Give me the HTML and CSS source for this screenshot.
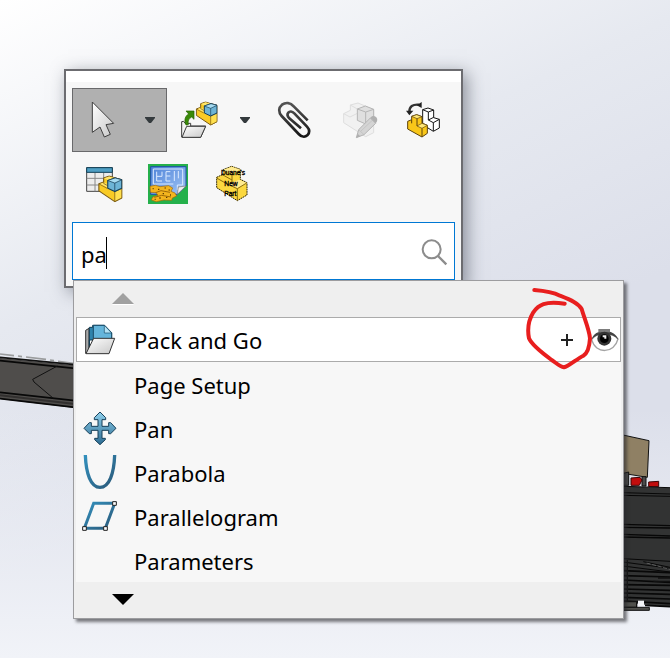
FILE: index.html
```html
<!DOCTYPE html>
<html lang="en">
<head>
<meta charset="utf-8">
<meta name="viewport" content="width=device-width, initial-scale=1">
<title>Shortcut bar</title>
<link rel="stylesheet" href="styles.css">
</head>
<body>
<svg class="defs" aria-hidden="true">
  <defs>
    <linearGradient id="steel" x1="0" y1="0" x2="1" y2="1"><stop offset="0" stop-color="#ffffff"/><stop offset="1" stop-color="#c8c8c8"/></linearGradient>
    <linearGradient id="blue" x1="0" y1="0" x2="0" y2="1"><stop offset="0" stop-color="#8fd0ec"/><stop offset="1" stop-color="#2d6c93"/></linearGradient>
    <linearGradient id="sketch" x1="0" y1="0" x2="1" y2="1"><stop offset="0" stop-color="#3390bd"/><stop offset="1" stop-color="#2a5878"/></linearGradient>
    <linearGradient id="clip" x1="0" y1="0" x2="0" y2="1"><stop offset="0" stop-color="#555"/><stop offset="1" stop-color="#151515"/></linearGradient>
    <linearGradient id="print" x1="0" y1="0" x2="1" y2="1"><stop offset="0" stop-color="#4f83d8"/><stop offset="1" stop-color="#9fc4f5"/></linearGradient>
    <symbol id="part" viewBox="-2 -2 66 73">
      <path d="M0 21 13 16V5L28 0 40 4 62 10V59L43 69 0 40Z" fill="#f9cb25" stroke="#7a5a12" stroke-width="3" stroke-linejoin="round"/>
      <path d="M14 6 28 1 42 5 26 11ZM2 22 13 17 24 22V33L18 28Z" fill="#ffe56b"/>
      <path d="M43 42 62 33V59L43 69Z" fill="#ffe04f" stroke="#7a5a12" stroke-width="2"/>
      <path d="M13 16V20L24 26M0 21 22 33" fill="none" stroke="#7a5a12" stroke-width="2"/>
      <path d="M24 12 44 5 62 10V33L43 42 24 33Z" fill="#6db4d6" stroke="#173f57" stroke-width="3" stroke-linejoin="round"/>
      <path d="M24 12 44 5 62 10 43 19Z" fill="#a7dcf2" stroke="#173f57" stroke-width="2"/>
      <path d="M43 19V41" stroke="#173f57" stroke-width="2"/>
    </symbol>
  </defs>
</svg>

<main class="viewport">
  <svg class="beam" viewBox="0 60 225 180" aria-hidden="true">
    <path d="M0 84 225 106V234L0 207Z" fill="#4f4d4b"/>
    <path d="M0 72 42 77M54 78 66 80M78 81 138 88M150 90 162 92M174 94 225 101" stroke="#9a9c9d" stroke-width="5"/>
    <path d="M0 82 225 104" stroke="#111" stroke-width="5"/>
    <path d="M0 92 225 115M0 187 225 212" stroke="#080808" stroke-width="5"/>
    <path d="M0 196 225 222" stroke="#32302f" stroke-width="6"/>
    <path d="M0 206 225 232" stroke="#080808" stroke-width="5"/>
    <path d="M172 108 98 148 102 156 160 205" fill="none" stroke="#111" stroke-width="3"/>
  </svg>
  <svg class="machine" viewBox="99 39 141 540" aria-hidden="true">
    <path d="M99 45 177 62 172 172 99 160Z" fill="#8f8064" stroke="#111" stroke-width="3"/>
    <path d="M100 160 116 156V196H100ZM156 170H168V198H156Z" fill="#4b4b4b" stroke="#111" stroke-width="3"/>
    <path d="M123 174 150 172 156 180 148 196H123ZM176 186 206 184V200H176Z" fill="#c20d0d" stroke="#3c0505" stroke-width="3"/>
    <path d="M99 199 240 204V560L165 554 99 545Z" fill="#323333"/>
    <path d="M99 199 240 203M99 218 240 222M99 226 240 229" stroke="#070707" stroke-width="3"/>
    <path d="M99 313 240 317M99 322 240 324M99 343 240 348M99 351 240 354" stroke="#070707" stroke-width="4"/>
    <path d="M99 416 240 424M99 426 240 445M99 438 240 456M160 425 240 442" stroke="#070707" stroke-width="3"/>
    <path d="M170 429 240 448" stroke="#777" stroke-width="2" stroke-dasharray="12 5"/>
    <path d="M99 452 240 458M99 467 240 471M99 480 240 487M99 494 240 496M99 507 240 511M99 519 240 523M99 532 240 537M99 543 240 551M165 556 240 560" stroke="#080808" stroke-width="5"/>
    <path d="M112 420V548M204 474H240M190 484H240" stroke="#111" stroke-width="4"/>
    <path d="M99 545H140V562H99Z" fill="#50504c" stroke="#111" stroke-width="4"/>
    <path d="M99 562H178V571H99Z" fill="#50504c" stroke="#111" stroke-width="3"/>
    <path d="M144 542H162V557H144Z" fill="#f4f5f8"/>
  </svg>

  <div class="shortcut">
    <section class="palette" aria-label="Shortcut bar">
      <div class="titlebar"></div>
      <div class="palette-body">
        <div class="tools">
          <div class="split selected">
            <button class="tool" aria-label="Select">
              <svg class="icon" viewBox="72 120 120 120"><path d="M97 126V217L120 201 133 231 151 223 138 194 161 190Z" fill="url(#steel)" stroke="#3f3f3f" stroke-width="3" stroke-linejoin="round"/></svg>
            </button>
            <button class="more" aria-label="Select options"><svg class="chevron" viewBox="0 0 12 6"><path d="M1 0H11V1L7 6H5L1 1Z"/></svg></button>
          </div>
          <div class="split">
            <button class="tool" aria-label="Open part">
              <svg class="icon" viewBox="357 120 120 120">
                <use href="#part" x="407" y="124" width="66" height="73"/>
                <path d="M365 231V185L371 184 375 190H392V198H437L422 232Z" fill="#f4f4f4" stroke="#3c3c3c" stroke-width="3" stroke-linejoin="round"/>
                <path d="M380 199H437L422 232H366Z" fill="url(#steel)" stroke="#3c3c3c" stroke-width="3" stroke-linejoin="round"/>
                <path d="M378 195C371 180 376 167 386 162L378 153H402V178L395 171C386 176 383 182 385 194Z" fill="#3a8a08" stroke="#256200" stroke-width="2"/>
              </svg>
            </button>
            <button class="more" aria-label="Open options"><svg class="chevron" viewBox="0 0 12 6"><path d="M1 0H11V1L7 6H5L1 1Z"/></svg></button>
          </div>
          <button class="tool" aria-label="Attach">
            <svg class="icon" viewBox="72 120 120 120"><path d="M173 181 132 140C121 127 107 126 96 134 85 143 85 157 95 168L146 222C154 231 165 232 172 226 180 218 179 209 171 200L133 160C126 153 119 153 115 158 111 163 113 170 118 175L153 205" fill="none" stroke="url(#clip)" stroke-width="8"/></svg>
          </button>
          <button class="tool" aria-label="Edit component" disabled>
            <svg class="icon" viewBox="264 120 120 120">
              <path d="M281 161 301 151V135L324 129 371 149V218L347 230 281 188Z" fill="#f1f1f1" stroke="#dedede" stroke-width="3"/>
              <path d="M281 161 300 171 322 160M301 135 322 147" fill="none" stroke="#dedede" stroke-width="3"/>
              <path d="M322 147 346 138 371 148V180L347 192 322 181Z" fill="#dfdfdf" stroke="#b5b5b5" stroke-width="3"/>
              <path d="M322 147 347 156 371 148M347 156V191" fill="none" stroke="#b5b5b5" stroke-width="3"/>
              <path d="M319 233 326 209 361 174 377 190 342 224Z" fill="#d4d4d4" stroke="#b4b4b4" stroke-width="3"/>
              <path d="M361 174C366 166 373 167 379 172 384 178 382 185 377 190ZM319 233 323 221 331 229Z" fill="#b0b0b0"/>
              <path d="M326 209 342 224M333 213 368 180" stroke="#bcbcbc" stroke-width="2"/>
            </svg>
          </button>
          <button class="tool" aria-label="Replace components">
            <svg class="icon" viewBox="456 120 120 120">
              <path d="M518 149 534 144 551 150V173L568 178V204L550 214 518 194Z" fill="#fff" stroke="#151515" stroke-width="3" stroke-linejoin="round"/>
              <path d="M518 149 535 156 551 150M535 156V180L550 188 568 178M550 188V213M535 180 551 172" fill="none" stroke="#151515" stroke-width="3"/>
              <path d="M473 184 485 179V169L500 164 516 170V189L532 196V220L516 231 473 207Z" fill="#f9c719" stroke="#5d430c" stroke-width="3" stroke-linejoin="round"/>
              <path d="M485 169 500 164 516 170 501 176ZM501 198 516 190 532 196 516 205Z" fill="#ffe777" stroke="#5d430c" stroke-width="2"/>
              <path d="M516 205V230M501 176V198M485 179V190" stroke="#5d430c" stroke-width="3"/>
              <path d="M478 155C478 140 488 132 507 134" fill="none" stroke="#333" stroke-width="7"/>
              <path d="M468 152H490L478 166ZM515 126V144L500 136Z" fill="#222"/>
            </svg>
          </button>
          <button class="tool" aria-label="Design table">
            <svg class="icon" viewBox="72 312 120 120">
              <path d="M80 323H157V394H80Z" fill="#ededed" stroke="#444" stroke-width="3"/>
              <path d="M80 355H157M80 375H157M105 338V394M131 338V394" stroke="#888" stroke-width="3"/>
              <path d="M80 323H157V337H80Z" fill="#4f9fc4" stroke="#123f56" stroke-width="3"/>
              <use href="#part" x="114" y="346" width="74" height="81"/>
            </svg>
          </button>
          <button class="tool" aria-label="Blueprint macro">
            <svg class="icon" viewBox="264 312 120 120">
              <path d="M264 312H384V432H264Z" fill="#25b04b"/>
              <path d="M272 320H378V378L352 403H272Z" fill="url(#print)" stroke="#1e4fa8" stroke-width="3"/>
              <path d="M280 327H368V375H352V390M280 327V372M290 335V363H306M290 349H306V335M318 335H331M318 348H331M318 335V363H331M343 333V363M355 333V355M280 372H340" fill="none" stroke="#dceaff" stroke-width="3"/>
              <path d="M352 403 355 381 378 378Z" fill="#eee" stroke="#777" stroke-width="2"/>
              <path d="M270 379 286 376 300 380 326 377 338 384 333 394 345 399 350 408 337 414 335 421 312 420 289 425 274 420 278 411 294 406 288 398 271 397Z" fill="#f4b51e" stroke="#a06a07" stroke-width="2"/>
              <path d="M278 386H281M294 388H298M314 384H317M326 390H329M308 401H312M330 405H333M298 414H302M318 412H322M284 418H287" stroke="#5c3a04" stroke-width="4"/>
              <path d="M287 398 303 392 330 397M283 412 305 406 333 411" fill="none" stroke="#a06a07" stroke-width="3"/>
            </svg>
          </button>
          <button class="tool" aria-label="Duane's new part">
            <svg class="icon" viewBox="456 312 120 120">
              <path d="M470 352 489 343V329L515 319 541 328V358L561 368V405L532 422 470 383Z" fill="#fbd840" stroke="#2d2508" stroke-width="3" stroke-dasharray="5 2"/>
              <path d="M489 330 515 320 541 329 516 341ZM503 373 538 359 560 369 532 385Z" fill="#ffeb91"/>
              <path d="M516 341V366M532 386V421M489 345 516 360M470 354 503 373 532 386 560 369" fill="none" stroke="#8a6c10" stroke-width="3"/>
              <text class="tiny" x="519" y="346">Duane's</text>
              <text class="tiny" x="513" y="377">New</text>
              <text class="tiny" x="511" y="408">Part</text>
            </svg>
          </button>
        </div>
        <div class="search">
          <input id="command" type="text" value="pa" autocomplete="off" spellcheck="false">
          <span class="caret"></span>
          <label class="find" for="command" aria-label="Search commands"><svg viewBox="60 100 84 84"><circle cx="95" cy="134" r="27"/><path d="M114 154 139 179"/></svg></label>
        </div>
      </div>
    </section>

    <section class="results" aria-label="Commands">
      <button class="scroll" aria-label="Scroll up" disabled><svg viewBox="0 0 22 12"><path d="M0 12H22L21 11H1Z" fill="#fff"/><path d="M11 0 22 11H0Z" fill="#a0a0a0"/></svg></button>
      <ul class="list">
        <li class="row current">
          <svg class="icon" viewBox="30 15 120 120">
            <path d="M47 115V46L57 40V108Z" fill="#aaa" stroke="#333" stroke-width="3"/>
            <path d="M58 98V37H68V31H104L125 53V75H58Z" fill="#2f83ab" stroke="#103c53" stroke-width="3"/>
            <path d="M70 31H103L125 54V80H70Z" fill="#65b5db" stroke="#174b68" stroke-width="3"/>
            <path d="M103 31V54H125Z" fill="#b3e2f5" stroke="#174b68" stroke-width="2"/>
            <path d="M48 116 71 70H134L117 116Z" fill="url(#steel)" stroke="#333" stroke-width="3" stroke-linejoin="round"/>
          </svg>
          <a class="name" href="#">Pack and Go</a>
          <button class="add" aria-label="Add to shortcut bar"><svg viewBox="0 0 12 12"><path d="M6 0V12M0 6H12"/></svg></button>
          <button class="show" aria-label="Show command location">
            <svg viewBox="573 363 84 84">
              <path d="M575 404C588 383 636 380 654 402 643 446 587 449 575 404Z" fill="#fff" stroke="#a3a3a3" stroke-width="4"/>
              <path d="M575 404C579 386 596 378 614 378 633 378 650 388 655 404 646 393 632 388 614 388 596 388 584 393 575 404Z" fill="#444"/>
              <path d="M595 372H630V382H595Z" fill="#7d7d7d"/>
              <circle cx="613" cy="401" r="21" fill="#333"/>
              <circle cx="613" cy="401" r="13" fill="#000"/>
              <path d="M608 391H619V401H613V397H608Z" fill="#eee"/>
            </svg>
          </button>
        </li>
        <li class="row"><span class="icon"></span><a class="name" href="#">Page Setup</a></li>
        <li class="row">
          <svg class="icon" viewBox="30 279 120 120"><path d="M90 291 107 308V314H96V334H116V323H122L138 340 122 356H116V346H96V370H106V374L90 389 74 374V370H84V346H64V356H58L42 340 58 323H64V334H84V314H73V308Z" fill="url(#blue)" stroke="#163f58" stroke-width="3" stroke-linejoin="round"/></svg>
          <a class="name" href="#">Pan</a>
        </li>
        <li class="row">
          <svg class="icon" viewBox="30 21 120 120"><path d="M46 30C48 85 62 127 90 127S132 85 134 30" fill="none" stroke="url(#sketch)" stroke-width="10"/></svg>
          <a class="name" href="#">Parabola</a>
        </li>
        <li class="row">
          <svg class="icon" viewBox="30 153 120 120"><path d="M71 175H134L106 250H43Z" fill="none" stroke="url(#sketch)" stroke-width="9"/><path d="M128 170H139V181H128ZM38 245H49V256H38ZM101 245H112V256H101Z" fill="#fff" stroke="#222" stroke-width="3"/></svg>
          <a class="name" href="#">Parallelogram</a>
        </li>
        <li class="row"><span class="icon"></span><a class="name" href="#">Parameters</a></li>
      </ul>
      <button class="scroll" aria-label="Scroll down"><svg viewBox="0 0 22 12"><path d="M0 0H22L11 11Z" fill="#000"/></svg></button>
      <svg class="mark" viewBox="375 243 204 252" aria-hidden="true"><path d="M403 255C440 258 460 262 480 272 515 286 535 295 545 312 553 340 568 375 570 400 568 430 562 445 550 452 530 462 505 485 492 487 480 485 470 475 455 465 425 443 395 420 387 400 382 375 386 345 400 322 415 300 435 287 494 296"/></svg>
    </section>
  </div>
</main>
</body>
</html>
```
FILE: styles.css
```css
* { box-sizing: border-box; }

body {
  margin: 0;
  font-family: "Noto Sans", "Open Sans", sans-serif;
  font-size: 22px;
  line-height: 32px;
  color: #000;
}

button {
  margin: 0;
  padding: 0;
  border: 0;
  background: none;
  font: inherit;
  color: inherit;
}

svg { display: block; }

.defs {
  position: absolute;
  width: 0;
  height: 0;
}

.viewport {
  position: relative;
  min-height: 100vh;
  padding: 69px 46px 39px 64px;
  overflow: hidden;
  background:
    linear-gradient(to bottom, rgba(241, 243, 248, 0) 62%, #f1f3f8 100%),
    linear-gradient(155deg, #ffffff 0%, #e6e9f0 34%, #dcdfea 60%, #dcdfea 100%);
}

.beam {
  position: absolute;
  left: 0;
  top: 350px;
  width: 75px;
}

.machine {
  position: absolute;
  right: 0;
  top: 433px;
  width: 47px;
}

.shortcut { position: relative; }

.palette {
  margin-right: 161px;
  border: 2px solid #6c6c70;
  background: #f7f7f7;
  box-shadow: 4px 4px 16px rgba(50, 55, 70, 0.5);
}

.titlebar {
  height: 11px;
  background: #fff;
}

.palette-body { padding: 6px; }

.tools {
  display: flex;
  flex-wrap: wrap;
  margin-bottom: 6px;
}

.split { display: flex; }

.selected {
  background: #b0b0b0;
  outline: 1px solid #69696b;
  outline-offset: -1px;
}

.tool {
  display: grid;
  place-items: center;
  width: 64px;
  height: 64px;
}

.more {
  display: grid;
  place-items: center;
  width: 31px;
  height: 64px;
  padding-right: 4px;
}

.icon {
  flex: none;
  width: 40px;
  height: 40px;
}

.chevron {
  width: 12px;
  height: 6px;
  fill: #343a3d;
}

.tiny {
  font-family: "Liberation Sans", sans-serif;
  font-size: 20px;
  text-anchor: middle;
  stroke: #000;
  stroke-width: 1;
}

.search {
  position: relative;
  display: flex;
  align-items: center;
  height: 58px;
  padding-right: 6px;
  border: 1px solid #0078d4;
  background: #fff;
}

.search input {
  flex: 1;
  min-width: 0;
  height: 56px;
  padding: 6px 0 0 8px;
  border: 0;
  outline: 0;
  background: none;
  font: inherit;
  color: inherit;
}

.caret {
  position: absolute;
  left: 33px;
  top: 14px;
  width: 1px;
  height: 32px;
  background: #000;
}

.find { padding-top: 2px; }

.find svg {
  width: 28px;
  height: 28px;
  fill: none;
  stroke: #8c8c8c;
  stroke-width: 6;
}

.find path { stroke-width: 7; }

.results {
  position: relative;
  margin: -8px 0 0 9px;
  padding: 0 2px;
  border: 1px solid #9c9c9f;
  background: #efefef;
  box-shadow: 3px 3px 3px rgba(40, 40, 45, 0.6);
}

.scroll {
  display: flex;
  align-items: center;
  width: 100%;
  height: 36px;
  padding-left: 36px;
}

.scroll svg {
  width: 22px;
  height: 12px;
}

.list {
  margin: 0;
  padding: 0;
  list-style: none;
  background: #f7f7f7;
}

.row {
  display: flex;
  align-items: center;
  height: 44px;
  padding: 0 1px 0 3px;
  border: 1px solid transparent;
}

.current {
  height: 45px;
  border-color: #ababab;
  background: #fff;
}

.name {
  flex: 1;
  padding: 1px 0 0 14px;
  color: inherit;
  text-decoration: none;
}

.add {
  display: grid;
  place-items: center;
  width: 24px;
  height: 24px;
  margin-right: 12px;
}

.add svg {
  width: 12px;
  height: 12px;
  stroke: #222;
  stroke-width: 2;
}

.show svg {
  width: 28px;
  height: 28px;
}

.mark {
  position: absolute;
  right: 30px;
  top: 5px;
  width: 68px;
  pointer-events: none;
  fill: none;
  stroke: #e81e1e;
  stroke-width: 12;
  stroke-linecap: round;
  stroke-linejoin: round;
}
```
